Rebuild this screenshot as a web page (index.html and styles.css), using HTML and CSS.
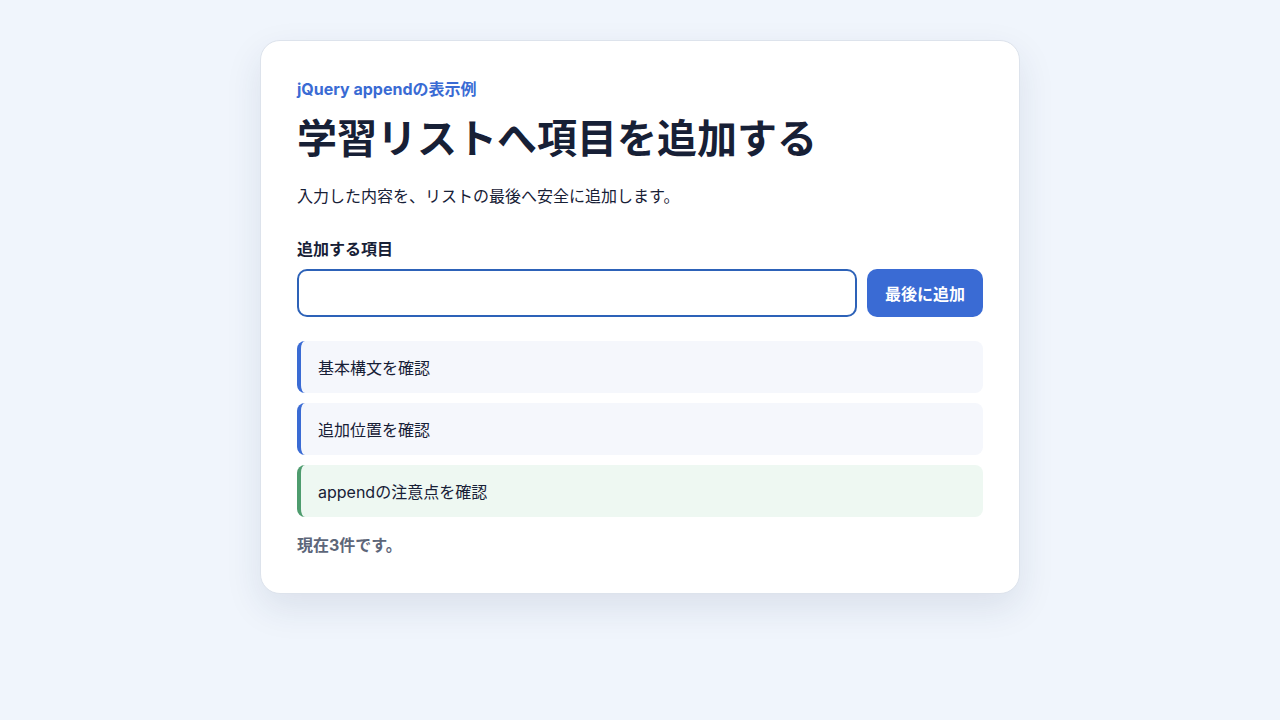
FILE: index.html
```html
<!DOCTYPE html>
<html lang="ja">
  <head>
    <meta charset="utf-8">
    <meta name="viewport" content="width=device-width, initial-scale=1" />
    <title>jQuery append demo</title>
    <link rel="stylesheet" href="styles.css">
  </head>
  <body>
    <main class="card">
      <p class="eyebrow">jQuery appendの表示例</p>
      <h1 class="title">学習リストへ項目を追加する</h1>
      <p class="lead">入力した内容を、リストの最後へ安全に追加します。</p>

      <label class="field-label" for="item-input">追加する項目</label>
      <div class="field-row">
        <input class="field-input" id="item-input" type="text">
        <button class="field-button" type="button">最後に追加</button>
      </div>

      <ul class="item-list">
        <li class="item-list-item">基本構文を確認</li>
        <li class="item-list-item">追加位置を確認</li>
        <li class="item-list-item added">appendの注意点を確認</li>
      </ul>

      <p class="status">現在3件です。</p>
    </main>
  </body>
</html>
```

FILE: styles.css
```css
* {
  box-sizing: border-box;
  margin: 0;
  padding: 0;
}
ul {
  list-style: none;
}
html,
body {
  height: 100%;
}
body {
  background-color: #f0f5fc;
  font-family: Inter, "Noto Sans CJK JP", sans-serif;
  color: #172036;
  padding-top: 40px;
}
.card {
  width: 760px;
  margin: 0 auto;
  padding: 36px;
  background-color: #fff;
  border: 1px solid #dde3ec;
  border-radius: 20px;
  box-shadow: 0 14px 36px rgba(30, 50, 90, .1);
}
.eyebrow {
  font-size: 16px;
  line-height: 24px;
  font-weight: 700;
  color: #3a6bd4;
}
.title {
  margin-top: 14px;
  font-size: 40px;
  line-height: 48px;
  font-weight: 700;
  color: #172036;
}
.lead {
  margin-top: 21px;
  font-size: 16px;
  line-height: 24px;
}
.field-label {
  display: block;
  margin-top: 29px;
  font-size: 16px;
  line-height: 24px;
  font-weight: 700;
}
.field-row {
  display: flex;
  gap: 10px;
  margin-top: 8px;
}
.field-input {
  flex: 1;
  height: 48px;
  padding: 0 14px;
  border: 2px solid #2d62b8;
  border-radius: 10px;
  font: inherit;
  font-size: 16px;
  outline: none;
}
.field-button {
  width: 116px;
  height: 48px;
  border: none;
  border-radius: 10px;
  background-color: #3a6bd4;
  color: #fff;
  font: inherit;
  font-size: 16px;
  font-weight: 700;
}
.item-list {
  display: flex;
  flex-direction: column;
  gap: 10px;
  margin-top: 24px;
}
.item-list-item {
  height: 52px;
  display: flex;
  align-items: center;
  padding-left: 17px;
  border-left: 4px solid #3a6bd4;
  border-radius: 8px;
  background-color: #f5f7fc;
  font-size: 16px;
}
.item-list-item.added {
  border-left-color: #4e9c6e;
  background-color: #eef8f2;
}
.status {
  margin-top: 16px;
  font-size: 16px;
  line-height: 24px;
  font-weight: 700;
  color: #5d6679;
}
```
